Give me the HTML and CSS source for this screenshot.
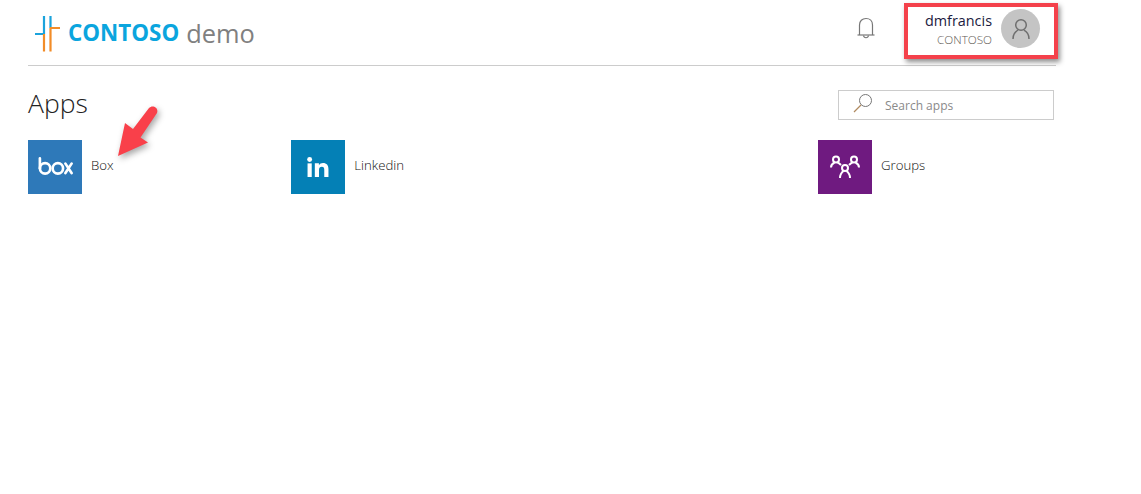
FILE: index.html
```html
<!DOCTYPE html>
<html>
<head>
<title>Apps</title>
<link rel="stylesheet" href="styles.css">
</head>
<body>
<div class="page">
  <div class="header">
    <div class="logo">
      <svg class="logo_mark" width="27" height="36" viewBox="0 0 27 36">
        <path d="M10 0V18M16.500 0V12M1 18H11" stroke="#1ba3dc" stroke-width="2.200" fill="none"/>
        <path d="M10 18V35.500M16.500 12V35.500M16 12H26" stroke="#f28c28" stroke-width="2.200" fill="none"/>
      </svg>
      <span class="logo_name">CONTOSO</span>
      <span class="logo_demo">demo</span>
    </div>
    <div class="header_right">
      <svg class="bell" width="20" height="22" viewBox="0 0 20 22">
        <path d="M3.500 18V8C3.500 4 6.200 1.500 10 1.500C13.800 1.500 16.500 4 16.500 8V18" fill="none" stroke="#777" stroke-width="1.200"/>
        <path d="M1.500 18H18.500" fill="none" stroke="#777" stroke-width="1.200"/>
        <path d="M7.500 18.500C8 21.500 12 21.500 12.500 18.500" fill="none" stroke="#777" stroke-width="1.200"/>
      </svg>
      <div class="user">
        <div class="user_text">
          <div class="user_name">dmfrancis</div>
          <div class="user_org">CONTOSO</div>
        </div>
        <div class="avatar">
          <svg width="20" height="22" viewBox="0 0 20 22">
            <circle cx="10" cy="7" r="5.300" fill="none" stroke="#6e6e6e" stroke-width="1.500"/>
            <path d="M2 21C2 16.500 4.500 13.500 7 12.200M18 21C18 16.500 15.500 13.500 13 12.200" fill="none" stroke="#6e6e6e" stroke-width="1.500"/>
          </svg>
        </div>
      </div>
    </div>
  </div>

  <div class="title_row">
    <h1>Apps</h1>
    <div class="search">
      <svg class="search_icon" width="20" height="20" viewBox="0 0 20 20">
        <circle cx="12.500" cy="7.500" r="6" fill="none" stroke="#777" stroke-width="1"/>
        <path d="M8 12L1 19" stroke="#b08a60" stroke-width="1.200"/>
      </svg>
      <span class="search_text">Search apps</span>
    </div>
  </div>

  <div class="apps">
    <div class="app">
      <div class="tile box">
        <svg width="35" height="18" viewBox="0 0 37 19">
          <g fill="none" stroke="#fff" stroke-width="2.800" stroke-linecap="round">
            <path d="M2 1.500V12"/>
            <circle cx="7.500" cy="12" r="5.500"/>
            <circle cx="21" cy="12" r="5.500"/>
            <path d="M29 7L35.500 17M35.500 7L29 17"/>
          </g>
        </svg>
      </div>
      <span class="app_name">Box</span>
    </div>
    <div class="app">
      <div class="tile linkedin">
        <svg width="22" height="20" viewBox="0 0 24 22">
          <rect x="0.500" y="7" width="4.600" height="15" fill="#fff"/>
          <circle cx="2.800" cy="2.800" r="2.700" fill="#fff"/>
          <path d="M8.500 7H13V9C14 7.500 15.500 6.600 17.500 6.600C21.500 6.600 23.500 9 23.500 13.500V22H18.900V14.200C18.900 12 18.200 10.700 16.300 10.700C14.200 10.700 13.100 12 13.100 14.200V22H8.500Z" fill="#fff"/>
        </svg>
      </div>
      <span class="app_name">Linkedin</span>
    </div>
    <div class="app app_last">
      <div class="tile groups">
        <svg width="30" height="24" viewBox="0 0 30 24">
          <g fill="none" stroke="#fff" stroke-width="2">
            <circle cx="6" cy="4.500" r="3"/>
            <circle cx="24" cy="4.500" r="3"/>
            <circle cx="15" cy="13" r="3"/>
            <path d="M1 12.500C1 10 2.500 8.500 4.500 7.500M7.500 7.500C9 8 10 9 11 10"/>
            <path d="M29 12.500C29 10 27.500 8.500 25.500 7.500M22.500 7.500C21 8 20 9 19 10"/>
            <path d="M10 23C10 19.500 11.500 17.500 13.500 16M20 23C20 19.500 18.500 17.500 16.500 16"/>
          </g>
        </svg>
      </div>
      <span class="app_name">Groups</span>
    </div>
  </div>
</div>

<!-- markup added on top of the screenshot -->
<div class="callout"></div>
<svg class="arrow" width="50" height="54" viewBox="0 0 50 54">
  <path d="M2 52L9 19L17 25L33 4C36 0.500 43 3 41 9L24.500 33.500L32 38.500Z" fill="#f9404a"/>
</svg>
</body>
</html>
```

FILE: styles.css
```css
body {
    margin: 0;
    background-color: #fff;
    font-family: "Open Sans", "Noto Sans", sans-serif;
    color: #333;
}

.page {
    width: 1028px;
    margin-left: 28px;
}

.header {
    display: flex;
    justify-content: space-between;
    align-items: center;
    height: 65px;
    border-bottom: 1px solid #ccc;
}

.logo {
    display: flex;
    align-items: center;
    padding-left: 6px;
}

.logo_mark {
    margin-right: 7px;
    margin-top: 3px;
}

.logo_name {
    font-family: "Open Sans", sans-serif;
    font-size: 22.4px;
    font-weight: 700;
    color: #0ba5de;
    margin-right: 7px;
}

.logo_demo {
    font-size: 25.400px;
    color: #808080;
}

.header_right {
    display: flex;
    align-items: center;
    padding-right: 16px;
}

.bell {
    margin-right: 49px;
    margin-top: -10px;
}

.user {
    display: flex;
    align-items: center;
    margin-top: -8px;
}

.user_text {
    text-align: right;
    margin-right: 9px;
    margin-top: 2px;
}

.user_name {
    font-size: 14.400px;
    line-height: 18px;
    color: #1a1a40;
}

.user_org {
    font-size: 11.700px;
    line-height: 18px;
    font-weight: 300;
    color: #5f5a55;
}

.avatar {
    display: flex;
    align-items: center;
    justify-content: center;
    width: 39px;
    height: 39px;
    border-radius: 50%;
    background-color: #c4c4c4;
}

.title_row {
    display: flex;
    justify-content: space-between;
    align-items: flex-start;
    padding-top: 24px;
    padding-right: 2px;
    height: 50px;
}

h1 {
    margin: -2px 0 0;
    font-size: 26.500px;
    font-weight: 300;
    line-height: 30px;
    color: #222;
}

.search {
    display: flex;
    align-items: center;
    box-sizing: border-box;
    width: 216px;
    height: 30px;
    border: 1px solid #ccc;
    padding-left: 14px;
}

.search_icon {
    margin-right: 12px;
    margin-top: -4px;
}

.search_text {
    font-size: 12px;
    color: #8a8a8a;
}

.apps {
    display: grid;
    grid-template-columns: repeat(4, 263.330px);
}

.app {
    display: flex;
    align-items: center;
}

.app_last {
    grid-column: 4;
}

.tile {
    display: flex;
    align-items: center;
    justify-content: center;
    width: 54px;
    height: 54px;
    margin-right: 9px;
}

.box { background-color: #2e79b9; padding-bottom: 3px; box-sizing: border-box; }
.linkedin { background-color: #0480b6; padding-bottom: 1px; box-sizing: border-box; }
.groups { background-color: #6f1a80; }

.app_name {
    font-size: 13.200px;
    font-weight: 300;
    color: #111;
    padding-bottom: 4px;
}

.callout {
    position: absolute;
    left: 904px;
    top: 3px;
    width: 146px;
    height: 48px;
    border: 4px solid #f4414b;
    box-shadow: 2px 3px 5px rgba(0, 0, 0, 0.45);
}

.arrow {
    position: absolute;
    left: 116px;
    top: 104px;
    filter: drop-shadow(2px 3px 3px rgba(0, 0, 0, 0.35));
}
```
